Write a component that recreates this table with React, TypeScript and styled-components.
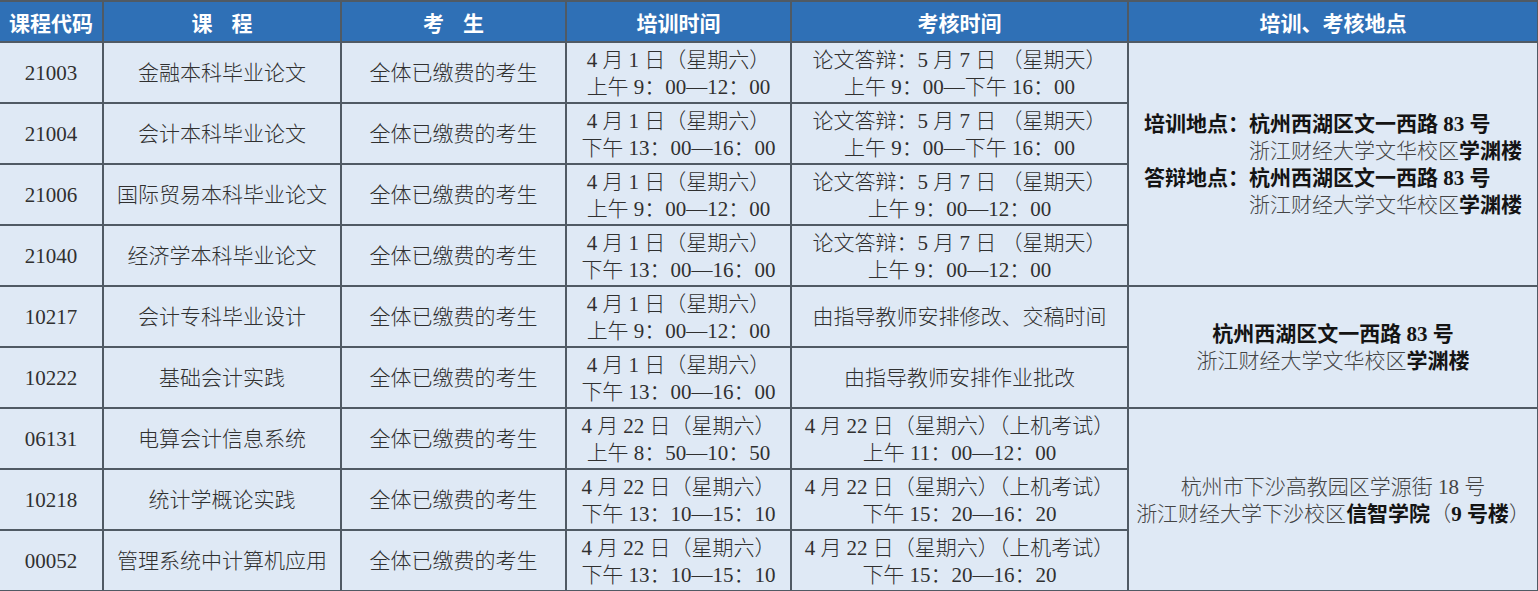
import React from "react";
import styled, { createGlobalStyle } from "styled-components";

const Global = createGlobalStyle`
  html, body { margin: 0; padding: 0; background: #ffffff; }
  body { font-family: "Liberation Serif", "Noto Sans CJK SC", serif; }
`;

const BORDER = "#505a64";

const Table = styled.table`
  width: 1538px;
  table-layout: fixed;
  border-collapse: collapse;
  font-family: "Liberation Serif", "Noto Sans CJK SC", serif;
`;

const HeadRow = styled.tr`
  height: 41px;
`;

const BodyRow = styled.tr`
  height: 61px;
`;

const Th = styled.th`
  background: #2f70b6;
  color: #ffffff;
  font-family: "Noto Sans CJK SC", sans-serif;
  font-weight: 700;
  font-size: 21px;
  line-height: 26px;
  padding: 0 2px;
  border: 2px solid ${BORDER};
  border-left: none;
  white-space: pre;
  text-align: center;
  vertical-align: middle;
`;

const Td = styled.td<{ $tight?: boolean }>`
  background: #dfe9f5;
  color: #303030;
  font-size: 21px;
  line-height: 27px;
  font-weight: 300;
  padding: ${(p) => (p.$tight ? "2px 0 0 0" : "2px 4px 0")};
  border: 2px solid ${BORDER};
  border-left: none;
  text-align: center;
  vertical-align: middle;
  white-space: nowrap;
  overflow: visible;
`;

const Line = styled.div`
  display: block;
`;

const LocBlock = styled.div`
  display: inline-grid;
  grid-template-columns: auto auto;
  text-align: left;
  row-gap: 0;
`;

const Label = styled.span`
  font-weight: 700;
  color: #141414;
`;

const Strong = styled.span`
  font-weight: 700;
  color: #141414;
`;

const Light = styled.span`
  color: #444444;
`;

type Row = {
  code: string;
  course: string;
  train: string[];
  exam: string[];
};

const rows: Row[] = [
  { code: "21003", course: "金融本科毕业论文", train: ["4 月 1 日（星期六）", "上午 9：00—12：00"], exam: ["论文答辩：5 月 7 日 （星期天）", "上午 9：00—下午 16：00"] },
  { code: "21004", course: "会计本科毕业论文", train: ["4 月 1 日（星期六）", "下午 13：00—16：00"], exam: ["论文答辩：5 月 7 日 （星期天）", "上午 9：00—下午 16：00"] },
  { code: "21006", course: "国际贸易本科毕业论文", train: ["4 月 1 日（星期六）", "上午 9：00—12：00"], exam: ["论文答辩：5 月 7 日 （星期天）", "上午 9：00—12：00"] },
  { code: "21040", course: "经济学本科毕业论文", train: ["4 月 1 日（星期六）", "下午 13：00—16：00"], exam: ["论文答辩：5 月 7 日 （星期天）", "上午 9：00—12：00"] },
  { code: "10217", course: "会计专科毕业设计", train: ["4 月 1 日（星期六）", "上午 9：00—12：00"], exam: ["由指导教师安排修改、交稿时间"] },
  { code: "10222", course: "基础会计实践", train: ["4 月 1 日（星期六）", "下午 13：00—16：00"], exam: ["由指导教师安排作业批改"] },
  { code: "06131", course: "电算会计信息系统", train: ["4 月 22 日（星期六）", "上午 8：50—10：50"], exam: ["4 月 22 日（星期六）（上机考试）", "上午 11：00—12：00"] },
  { code: "10218", course: "统计学概论实践", train: ["4 月 22 日（星期六）", "下午 13：10—15：10"], exam: ["4 月 22 日（星期六）（上机考试）", "下午 15：20—16：20"] },
  { code: "00052", course: "管理系统中计算机应用", train: ["4 月 22 日（星期六）", "下午 13：10—15：10"], exam: ["4 月 22 日（星期六）（上机考试）", "下午 15：20—16：20"] },
];

const Campus = () => (
  <>
    <Light>浙江财经大学文华校区</Light>
    <Strong>学渊楼</Strong>
  </>
);

const Location = ({ index }: { index: number }) => {
  if (index === 0) {
    return (
      <Td rowSpan={4}>
        <LocBlock>
          <Label>培训地点：</Label>
          <Strong>杭州西湖区文一西路 83 号</Strong>
          <span />
          <span><Campus /></span>
          <Label>答辩地点：</Label>
          <Strong>杭州西湖区文一西路 83 号</Strong>
          <span />
          <span><Campus /></span>
        </LocBlock>
      </Td>
    );
  }
  if (index === 4) {
    return (
      <Td rowSpan={2}>
        <Line><Strong>杭州西湖区文一西路 83 号</Strong></Line>
        <Line><Campus /></Line>
      </Td>
    );
  }
  if (index === 6) {
    return (
      <Td rowSpan={3} $tight>
        <Line><Light>杭州市下沙高教园区学源街 18 号</Light></Line>
        <Line>
          <Light>浙江财经大学下沙校区</Light>
          <Strong>信智学院</Strong>
          <Light>（</Light>
          <Strong>9 号楼</Strong>
          <Light>）</Light>
        </Line>
      </Td>
    );
  }
  return null;
};

export default function App() {
  return (
    <>
      <Global />
      <Table>
        <colgroup>
          <col style={{ width: 103 }} />
          <col style={{ width: 238 }} />
          <col style={{ width: 225 }} />
          <col style={{ width: 225 }} />
          <col style={{ width: 337 }} />
          <col style={{ width: 410 }} />
        </colgroup>
        <thead>
          <HeadRow>
            <Th>课程代码</Th>
            <Th>{"课    程"}</Th>
            <Th>{"考    生"}</Th>
            <Th>培训时间</Th>
            <Th>考核时间</Th>
            <Th>培训、考核地点</Th>
          </HeadRow>
        </thead>
        <tbody>
          {rows.map((r, i) => (
            <BodyRow key={r.code}>
              <Td>{r.code}</Td>
              <Td>{r.course}</Td>
              <Td>全体已缴费的考生</Td>
              <Td>
                {r.train.map((t) => (
                  <Line key={t}>{t}</Line>
                ))}
              </Td>
              <Td>
                {r.exam.map((t) => (
                  <Line key={t}>{t}</Line>
                ))}
              </Td>
              <Location index={i} />
            </BodyRow>
          ))}
        </tbody>
      </Table>
    </>
  );
}
